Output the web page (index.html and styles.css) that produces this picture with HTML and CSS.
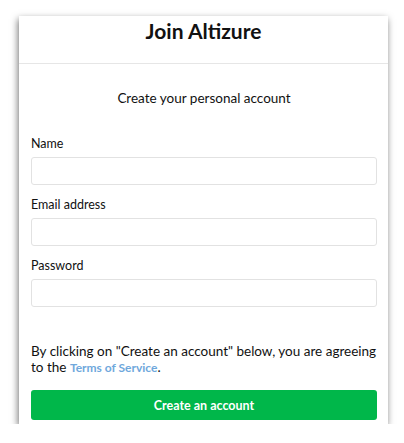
FILE: index.html
```html
<!DOCTYPE html>
<html>
<head>
<meta charset="utf-8">
<link rel="stylesheet" href="styles.css">
</head>
<body>
<div class="card">
  <div class="header"><h1 class="title">Join Altizure</h1></div>
  <div class="body">
    <p class="subtitle">Create your personal account</p>
    <div class="field">
      <label class="label">Name</label>
      <div class="input"></div>
    </div>
    <div class="field">
      <label class="label">Email address</label>
      <div class="input"></div>
    </div>
    <div class="field">
      <label class="label">Password</label>
      <div class="input"></div>
    </div>
    <p class="terms">By clicking on "Create an account" below, you are agreeing to the <a class="link">Terms of Service</a>.</p>
    <div class="button">Create an account</div>
  </div>
</div>
</body>
</html>
```
FILE: styles.css
```css
* { box-sizing: border-box; }
html, body { margin: 0; padding: 0; background: #fff; }
body {
  font-family: Lato, "Noto Sans", sans-serif;
  color: #111;
  padding: 16px 0 0 19px;
}
.card {
  width: 369px;
  height: 408px;
  background: #fff;
  box-shadow: -1px 3px 7px rgba(0,0,0,0.55);
}
.header {
  height: 48px;
  border-bottom: 1px solid #e6e6e6;
  display: flex;
  justify-content: center;
}
.title {
  margin: 0;
  font-size: 21px;
  font-weight: 700;
  line-height: 30px;
}
.body {
  padding: 0 11px 0 12px;
  display: flex;
  flex-direction: column;
}
.subtitle {
  margin: 24px 0 0;
  text-align: center;
  font-size: 13.5px;
  line-height: 20px;
}
.field {
  display: flex;
  flex-direction: column;
}
.field:first-of-type { margin-top: 27px; }
.label {
  font-size: 12.5px;
  line-height: 18px;
  margin-top: 0;
  margin-bottom: 4px;
}
.field + .field { margin-top: 11px; }
.input {
  height: 28px;
  border: 1px solid #e2e2e2;
  border-radius: 3px;
  background: #fff;
}
.terms {
  margin: 36px 0 0;
  font-size: 13.5px;
  line-height: 16px;
}
.link {
  color: #6fa8dc;
  font-weight: 700;
  font-size: 12px;
}
.button {
  margin-top: 14px;
  height: 30px;
  border-radius: 3px;
  background: #00b74a;
  color: #fff;
  font-weight: 700;
  font-size: 12.5px;
  display: flex;
  align-items: center;
  justify-content: center;
}
```
